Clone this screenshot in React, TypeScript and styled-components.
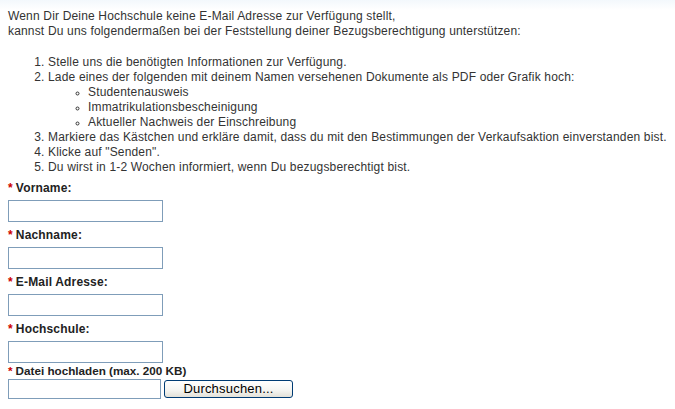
import styled, { createGlobalStyle } from 'styled-components';

const GlobalStyle = createGlobalStyle`
  html, body {
    margin: 0;
    padding: 0;
    background: #fff linear-gradient(#f3f8fc, #fff 10px) no-repeat;
  }
  body {
    font-family: "Liberation Sans", Arial, sans-serif;
    font-size: 12px;
    line-height: 15px;
    letter-spacing: 0.17px;
    color: #333;
  }
`;

const Page = styled.div`
  padding: 9px 8px 0 8px;
`;

const Intro = styled.p`
  margin: 0 0 16px 0;
`;

const Steps = styled.ol`
  margin: 0 0 6px 0;
  padding-left: 40px;
  white-space: nowrap;
`;

const SubList = styled.ul`
  margin: 0;
  padding-left: 40px;
  list-style-type: circle;

  li::marker {
    font-size: 9px;
  }
`;

const Field = styled.div<{ $tight?: boolean }>`
  display: flex;
  flex-direction: column;
  align-items: flex-start;
  margin-bottom: ${(p) => (p.$tight ? '0' : '6px')};
`;

const Label = styled.label<{ $light?: boolean }>`
  font-weight: bold;
  color: #222;
  margin-bottom: ${(p) => (p.$light ? '1px' : '4px')};
  font-size: ${(p) => (p.$light ? '11.7px' : '12px')};
  letter-spacing: ${(p) => (p.$light ? '0' : '0.17px')};
`;

const Star = styled.span`
  color: #c00;
  margin-right: 3px;
`;

const TextInput = styled.input`
  box-sizing: border-box;
  width: 155px;
  height: 22px;
  margin: 0;
  border: 1px solid #7f9db9;
  background: #fff;
  font: inherit;
`;

const FileRow = styled.div`
  display: flex;
  align-items: center;
  gap: 3px;
`;

const FileName = styled(TextInput)`
  width: 153px;
  height: 20px;
`;

const BrowseButton = styled.button`
  box-sizing: border-box;
  width: 129px;
  height: 18px;
  padding: 0;
  border: 1px solid #003c74;
  border-radius: 3px;
  background: linear-gradient(#ffffff, #f4f4f0 60%, #e3e1d8);
  font-family: "Liberation Sans", Arial, sans-serif;
  font-size: 13px;
  line-height: 16px;
  letter-spacing: 0.2px;
  color: #000;
`;

const fields = ['Vorname:', 'Nachname:', 'E-Mail Adresse:', 'Hochschule:'];

export default function App() {
  return (
    <Page>
      <GlobalStyle />
      <Intro>
        Wenn Dir Deine Hochschule keine E-Mail Adresse zur Verfügung stellt,
        <br />
        kannst Du uns folgendermaßen bei der Feststellung deiner Bezugsberechtigung unterstützen:
      </Intro>
      <Steps>
        <li>Stelle uns die benötigten Informationen zur Verfügung.</li>
        <li>
          Lade eines der folgenden mit deinem Namen versehenen Dokumente als PDF oder Grafik hoch:
          <SubList>
            <li>Studentenausweis</li>
            <li>Immatrikulationsbescheinigung</li>
            <li>Aktueller Nachweis der Einschreibung</li>
          </SubList>
        </li>
        <li>Markiere das Kästchen und erkläre damit, dass du mit den Bestimmungen der Verkaufsaktion einverstanden bist.</li>
        <li>Klicke auf "Senden".</li>
        <li>Du wirst in 1-2 Wochen informiert, wenn Du bezugsberechtigt bist.</li>
      </Steps>
      {fields.map((f, i) => (
        <Field key={f} $tight={i === fields.length - 1}>
          <Label>
            <Star>*</Star>
            {f}
          </Label>
          <TextInput type="text" />
        </Field>
      ))}
      <Field>
        <Label $light>
          <Star>*</Star>
          Datei hochladen (max. 200 KB)
        </Label>
        <FileRow>
          <FileName type="text" readOnly />
          <BrowseButton type="button">Durchsuchen...</BrowseButton>
        </FileRow>
      </Field>
    </Page>
  );
}
